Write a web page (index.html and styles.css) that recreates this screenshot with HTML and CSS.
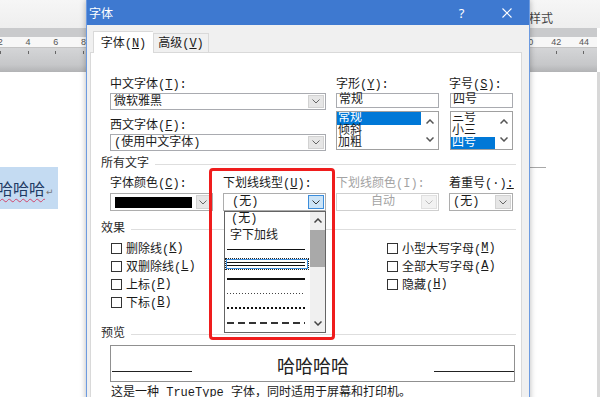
FILE: index.html
```html
<!DOCTYPE html>
<html lang="zh-CN">
<head>
    <meta charset="UTF-8">
    <meta name="viewport" content="width=device-width, initial-scale=1.0">
    <title>字体</title>
    <link rel="stylesheet" href="styles.css">
</head>
<body>
<div class="app">
    <div class="ribbon"><span class="ribbon-label">样式</span></div>

    <div class="ruler">
        <div class="ruler-band"></div>
        <!-- numbers 10..38 sit behind the dialog -->
        <div class="ruler-scale">
            <span>2</span><span>4</span><span>6</span><span>8</span><span></span><span></span>
            <span></span><span></span><span></span><span></span><span></span><span></span>
            <span></span><span></span><span></span><span></span><span></span><span></span>
            <span></span><span>40</span><span>42</span><span>44</span>
        </div>
        <div class="ruler-lower">
            <i></i><i></i><i></i><i></i><i></i><i></i><i></i><i></i><i></i><i></i><i></i>
            <i></i><i></i><i></i><i></i><i></i><i></i><i></i><i></i><i></i><i></i><i></i>
        </div>
    </div>

    <div class="doc">
        <div class="doc-line"><span class="doc-text">哈哈哈</span><span class="doc-ret">↵</span></div>
        <div class="doc-margin"></div>
    </div>

    <!-- 字体 dialog -->
    <div class="dialog">
        <div class="dialog-title">
            <span class="dialog-name">字体</span>
            <span class="caption-btn caption-help">?</span>
            <span class="caption-btn">
                <svg width="10" height="10" viewBox="0 0 10 10"><path d="M0.5 0.5L9.5 9.5M9.5 0.5L0.5 9.5" stroke="#fff" stroke-width="1.1"/></svg>
            </span>
        </div>

        <div class="dialog-body">
            <div class="tabs">
                <div class="tab tab-active">字体(<u>N</u>)</div>
                <div class="tab">高级(<u>V</u>)</div>
            </div>

            <div class="panel">
                <div class="fields font-grid">
                    <div class="field-wide">
                        <div class="lbl">中文字体(<u>T</u>):</div>
                        <div class="combo combo-edit">
                            <span class="combo-text">微软雅黑</span>
                            <span class="drop"><svg width="8" height="5" viewBox="0 0 8 5"><path d="M0.5 0.5L4 4L7.5 0.5" fill="none" stroke="#666"/></svg></span>
                        </div>
                        <div class="lbl lbl-second">西文字体(<u>F</u>):</div>
                        <div class="combo combo-edit">
                            <span class="combo-text">(使用中文字体)</span>
                            <span class="drop"><svg width="8" height="5" viewBox="0 0 8 5"><path d="M0.5 0.5L4 4L7.5 0.5" fill="none" stroke="#666"/></svg></span>
                        </div>
                    </div>

                    <div>
                        <div class="lbl">字形(<u>Y</u>):</div>
                        <div class="edit">常规</div>
                        <div class="listbox">
                            <div class="list-items">
                                <div class="list-item list-selected">常规</div>
                                <div class="list-item">倾斜</div>
                                <div class="list-item">加粗</div>
                            </div>
                            <div class="list-bar">
                                <svg width="8" height="5" viewBox="0 0 8 5"><path d="M0.5 4.5L4 1L7.5 4.5" fill="none" stroke="#555" stroke-width="1.5"/></svg>
                                <svg width="8" height="5" viewBox="0 0 8 5"><path d="M0.5 0.5L4 4L7.5 0.5" fill="none" stroke="#555" stroke-width="1.5"/></svg>
                            </div>
                        </div>
                    </div>

                    <div class="size-col">
                        <div class="lbl">字号(<u>S</u>):</div>
                        <div class="edit">四号</div>
                        <div class="listbox">
                            <div class="list-items">
                                <div class="list-item">三号</div>
                                <div class="list-item">小三</div>
                                <div class="list-item list-selected">四号</div>
                            </div>
                            <div class="list-bar">
                                <svg width="8" height="5" viewBox="0 0 8 5"><path d="M0.5 4.5L4 1L7.5 4.5" fill="none" stroke="#555" stroke-width="1.5"/></svg>
                                <svg width="8" height="5" viewBox="0 0 8 5"><path d="M0.5 0.5L4 4L7.5 0.5" fill="none" stroke="#555" stroke-width="1.5"/></svg>
                            </div>
                        </div>
                    </div>
                </div>

                <div class="group-head head-all"><span>所有文字</span><i class="rule"></i></div>

                <div class="fields combo-grid">
                    <div>
                        <div class="lbl">字体颜色(<u>C</u>):</div>
                        <div class="combo">
                            <span class="swatch"></span>
                            <span class="drop"><svg width="8" height="5" viewBox="0 0 8 5"><path d="M0.5 0.5L4 4L7.5 0.5" fill="none" stroke="#666"/></svg></span>
                        </div>
                    </div>
                    <div>
                        <div class="lbl">下划线线型(<u>U</u>):</div>
                        <div class="combo combo-open">
                            <span class="combo-text">(无)</span>
                            <span class="drop drop-hot"><svg width="8" height="5" viewBox="0 0 8 5"><path d="M0.5 0.5L4 4L7.5 0.5" fill="none" stroke="#333"/></svg></span>

                            <div class="ul-list">
                                <div class="ul-items">
                                    <div class="ul-item ul-text">(无)</div>
                                    <div class="ul-item ul-text ul-text2">字下加线</div>
                                    <div class="ul-item"><span class="ln ln-single"></span></div>
                                    <div class="ul-item ul-sel"><span class="sel-box"><span class="ln ln-double"></span></span></div>
                                    <div class="ul-item"><span class="ln ln-thick"></span></div>
                                    <div class="ul-item"><span class="ln ln-dot"></span></div>
                                    <div class="ul-item"><span class="ln ln-dot-heavy"></span></div>
                                    <div class="ul-item"><span class="ln ln-dash"></span></div>
                                </div>
                                <div class="ul-bar">
                                    <span class="ul-arrow"><svg width="8" height="5" viewBox="0 0 8 5"><path d="M0.5 4.5L4 1L7.5 4.5" fill="none" stroke="#444" stroke-width="1.5"/></svg></span>
                                    <span class="ul-thumb"></span>
                                    <span class="ul-track"></span>
                                    <span class="ul-arrow"><svg width="8" height="5" viewBox="0 0 8 5"><path d="M0.5 0.5L4 4L7.5 0.5" fill="none" stroke="#444" stroke-width="1.5"/></svg></span>
                                </div>
                            </div>
                        </div>
                    </div>
                    <div>
                        <div class="lbl lbl-disabled">下划线颜色(I):</div>
                        <div class="combo combo-disabled">
                            <span class="combo-text combo-center">自动</span>
                            <span class="drop"><svg width="8" height="5" viewBox="0 0 8 5"><path d="M0.5 0.5L4 4L7.5 0.5" fill="none" stroke="#bbb"/></svg></span>
                        </div>
                    </div>
                    <div>
                        <div class="lbl">着重号(·)<u>:</u></div>
                        <div class="combo">
                            <span class="combo-text combo-tight">(无)</span>
                            <span class="drop"><svg width="8" height="5" viewBox="0 0 8 5"><path d="M0.5 0.5L4 4L7.5 0.5" fill="none" stroke="#666"/></svg></span>
                        </div>
                    </div>
                </div>

                <div class="group-head head-effects"><span>效果</span><i class="rule"></i></div>

                <div class="checks">
                    <div class="check-col check-col-left">
                        <div class="check"><span class="box"></span>删除线(<u>K</u>)</div>
                        <div class="check"><span class="box"></span>双删除线(<u>L</u>)</div>
                        <div class="check"><span class="box"></span>上标(<u>P</u>)</div>
                        <div class="check"><span class="box"></span>下标(<u>B</u>)</div>
                    </div>
                    <div class="check-col">
                        <div class="check"><span class="box"></span>小型大写字母(<u>M</u>)</div>
                        <div class="check"><span class="box"></span>全部大写字母(<u>A</u>)</div>
                        <div class="check"><span class="box"></span>隐藏(<u>H</u>)</div>
                    </div>
                </div>

                <div class="group-head head-preview"><span>预览</span><i class="rule"></i></div>

                <div class="preview">
                    <span class="preview-line"></span>
                    <span class="preview-text">哈哈哈哈</span>
                    <span class="preview-line"></span>
                </div>
                <div class="note">这是一种 TrueType 字体，同时适用于屏幕和打印机。</div>
            </div>
        </div>
    </div>

    <!-- red highlight drawn over the screenshot -->
    <div class="annotation"></div>
</div>
</body>
</html>
```

FILE: styles.css
```css
* {
    box-sizing: border-box;
}
body {
    margin: 0;
    font-family: "Liberation Mono", "Noto Sans CJK SC", monospace;
    font-size: 12px;
    color: #1a1a1a;
}
u {
    text-underline-offset: 1px;
}
.app {
    position: relative;
    width: 600px;
    height: 397px;
    overflow: hidden;
    background: #fff;
    display: flex;
    flex-direction: column;
}

/* word window behind the dialog */
.ribbon {
    height: 28px;
    flex: none;
    background: linear-gradient(#f6f6f6, #eeeeee);
    display: flex;
    justify-content: flex-end;
    align-items: center;
    padding: 6px 47px 0 0;
}
.ribbon-label {
    font-family: "Noto Sans CJK SC", sans-serif;
    color: #444;
    font-size: 12px;
}
.ruler {
    height: 44px;
    flex: none;
    margin-right: 3px;
    display: flex;
    flex-direction: column;
    overflow: hidden;
}
.ruler-band {
    height: 9px;
    background: #c9cacc;
}
.ruler-scale {
    height: 11px;
    display: flex;
    margin-left: -13.7px;
    background: #f7f7f7;
    border-bottom: 1px solid #c4c4c4;
    font-family: "Liberation Sans", sans-serif;
    font-size: 9px;
    line-height: 10px;
    color: #555;
}
.ruler-scale span,
.ruler-lower i {
    flex: none;
    width: 27.8px;
    text-align: center;
}
.ruler-lower {
    flex: 1;
    display: flex;
    margin-left: -13.7px;
    background: linear-gradient(#d4d5d7, #c6c7c9 70%, #b2b3b5);
}
.ruler-lower i {
    background: linear-gradient(#666, #666) center 3px / 1px 3px no-repeat;
}
.doc {
    flex: 1;
    display: flex;
    justify-content: space-between;
    align-items: flex-start;
    padding-top: 95px;
    border-right: 3px solid #d8d8d8;
}
.doc-line {
    margin-left: -3px;
    height: 42px;
    line-height: 42px;
    padding-right: 4px;
    background: #c4dbf2;
}
.doc-text {
    font-family: "Noto Sans CJK SC", sans-serif;
    font-size: 16px;
    color: #1f3b64;
    text-decoration: underline wavy #d2456a;
    text-decoration-thickness: 1px;
    text-underline-offset: 3px;
}
.doc-ret {
    font-family: "DejaVu Sans", sans-serif;
    font-size: 9px;
    color: #777;
    margin-left: 1px;
}
.doc-margin {
    width: 16px;
    height: 1px;
    background: #a8a8a8;
    margin-right: 51px;
}

/* dialog */
.dialog {
    position: absolute;
    left: 86px;
    top: 0;
    width: 444px;
    height: 440px;
    background: #f0f0f0;
    border-left: 1px solid #6d9be0;
    border-right: 1px solid #6d9be0;
    box-shadow: 0 0 6px rgba(0, 0, 0, 0.28);
}
.dialog-title {
    height: 25px;
    background: #3e79d0;
    color: #fff;
    display: flex;
    align-items: center;
    padding-left: 2px;
    font-family: "Noto Sans CJK SC", sans-serif;
    font-size: 12px;
}
.dialog-name {
    flex: 1;
}
.caption-btn {
    width: 45px;
    height: 25px;
    display: flex;
    align-items: center;
    justify-content: center;
}
.caption-help {
    font-family: "Noto Sans", sans-serif;
    font-size: 13px;
}
.dialog-body {
    padding: 0 7px 0 3px;
}
.tabs {
    height: 27px;
    display: flex;
    align-items: flex-end;
    padding-left: 3px;
}
.tab {
    width: 56px;
    height: 19px;
    padding-top: 1px;
    line-height: 18px;
    text-align: center;
    border: 1px solid #d9d9d9;
    border-bottom: none;
    background: #f0f0f0;
}
.tab-active {
    position: relative;
    z-index: 1;
    width: 60px;
    height: 22px;
    padding-top: 3px;
    margin-bottom: -1px;
    background: #fff;
    border-right: none;
}
.panel {
    height: 400px;
    background: #fff;
    border: 1px solid #d9d9d9;
    padding: 25px 5px 0 10px;
}
.fields {
    margin-left: 9px;
    display: grid;
    grid-template-columns: 103px 103px 103px 64px;
    column-gap: 10px;
}
.field-wide {
    grid-column: 1 / 3;
}
.lbl {
    height: 15px;
    line-height: 15px;
    white-space: nowrap;
}
.lbl-second {
    margin-top: 9px;
}
.lbl-disabled {
    color: #a3a3a3;
}
.combo {
    position: relative;
    height: 18px;
    display: flex;
    align-items: center;
    border: 1px solid #adadad;
    background: #fff;
    padding: 1px;
    margin-top: 1px;
}
.combo-edit {
    height: 17px;
    margin-top: 0;
    border-color: #a9abb0;
}
.combo-text {
    flex: 1;
    padding-left: 7px;
    white-space: nowrap;
    line-height: 14px;
}
.combo-edit .combo-text {
    padding-left: 2px;
}
.combo-tight {
    padding-left: 2px;
}
.combo-center {
    text-align: center;
    color: #a3a3a3;
}
.drop {
    width: 16px;
    align-self: stretch;
    display: flex;
    align-items: center;
    justify-content: center;
    background: #e6e6e6;
    border: 1px solid #d2d2d2;
}
.drop-hot {
    background: #cce4f7;
    border-color: #3c8ddb;
}
.combo-disabled {
    border-color: #cfcfcf;
}
.combo-disabled .drop {
    background: #f2f2f2;
    border-color: #e0e0e0;
}
.swatch {
    width: 80px;
    height: 11px;
    background: #000;
    margin: 0 4px 0 3px;
}
.edit {
    height: 15px;
    line-height: 13px;
    padding-left: 2px;
    border: 1px solid #a9abb0;
}
.size-col .edit,
.size-col .listbox {
    margin-left: 1px;
}
.listbox {
    margin-top: 3px;
    height: 39px;
    display: flex;
    border: 1px solid #a0a0a0;
    overflow: hidden;
}
.list-items {
    flex: 1;
    overflow: hidden;
}
.list-item {
    height: 12.5px;
    line-height: 12.5px;
    padding-left: 1px;
    white-space: nowrap;
}
.list-selected {
    background: #0078d7;
    color: #fff;
}
.list-bar {
    width: 17px;
    display: flex;
    flex-direction: column;
    align-items: center;
    justify-content: space-around;
}
.group-head {
    height: 14px;
    line-height: 14px;
    display: flex;
    align-items: center;
    color: #2a2a2a;
}
.rule {
    flex: 1;
    height: 1px;
    margin-left: 6px;
    background: #dedede;
}
.head-all {
    margin-top: 6px;
}
.combo-grid {
    margin-top: 6px;
}
.head-effects {
    margin-top: 11px;
}
.head-preview {
    margin-top: 16px;
}

/* underline style drop-down */
.ul-list {
    position: absolute;
    z-index: 2;
    left: 0;
    top: 17px;
    width: 102px;
    height: 122px;
    display: flex;
    background: #fff;
    border: 1px solid #646464;
}
.ul-items {
    flex: 1;
    overflow: hidden;
}
.ul-item {
    height: 14.7px;
    display: flex;
    align-items: center;
    padding: 0 4px 0 2px;
}
.ul-text {
    height: 16px;
    margin-top: -3px;
    padding-left: 6px;
    white-space: nowrap;
}
.ul-text2 {
    height: 17px;
    margin-top: 0;
    padding-left: 5px;
}
.ln {
    display: block;
    width: 78px;
}
.ln-single {
    height: 1px;
    background: #111;
}
.ln-double {
    height: 4px;
    border-top: 1px solid #111;
    border-bottom: 1px solid #111;
}
.ln-thick {
    height: 2px;
    background: #111;
}
.ln-dot {
    height: 1px;
    background: repeating-linear-gradient(90deg, #444 0 1px, transparent 1px 3px);
}
.ln-dot-heavy {
    height: 2px;
    background: repeating-linear-gradient(90deg, #111 0 2px, transparent 2px 4px);
}
.ln-dash {
    height: 1.5px;
    background: repeating-linear-gradient(90deg, #333 0 7px, transparent 7px 11px);
}
.ul-sel {
    padding: 0 1px 0 0;
}
.sel-box {
    width: 84px;
    height: 12px;
    display: flex;
    align-items: center;
    padding-left: 1px;
    border: 1px dotted #222;
    box-shadow: inset 0 0 0 1px #3c8ddb;
}
.ul-bar {
    width: 15px;
    display: flex;
    flex-direction: column;
    background: #f0f0f0;
}
.ul-arrow {
    height: 17px;
    display: flex;
    align-items: center;
    justify-content: center;
}
.ul-thumb {
    height: 37px;
    margin: 1px 0 0;
    background: #a9a9a9;
}
.ul-track {
    flex: 1;
}

/* effects */
.checks {
    margin: 3px 0 0 10px;
    display: flex;
}
.check-col {
    flex: 1;
}
.check-col-left {
    flex: none;
    width: 276px;
}
.check {
    height: 18px;
    display: flex;
    align-items: center;
    white-space: nowrap;
}
.box {
    width: 11px;
    height: 11px;
    margin-right: 4px;
    border: 1px solid #333;
    background: #fff;
}

/* preview */
.preview {
    height: 37px;
    margin: 4px 1px 0 9px;
    padding: 0 0 0 1px;
    display: flex;
    border: 1px solid #909090;
}
.preview-line {
    width: 80px;
    height: 1px;
    margin-top: 25px;
    background: #222;
}
.preview-text {
    flex: 1;
    text-align: center;
    padding-top: 4px;
    line-height: 31px;
    font-family: "Noto Sans CJK SC", sans-serif;
    font-size: 18px;
    color: #222;
}
.note {
    margin: 4px 0 0 10px;
    line-height: 14px;
    white-space: nowrap;
}

.annotation {
    position: absolute;
    left: 209px;
    top: 168px;
    width: 126px;
    height: 172px;
    border: 3px solid #ef1d1d;
    border-radius: 4px;
    z-index: 3;
}
```
